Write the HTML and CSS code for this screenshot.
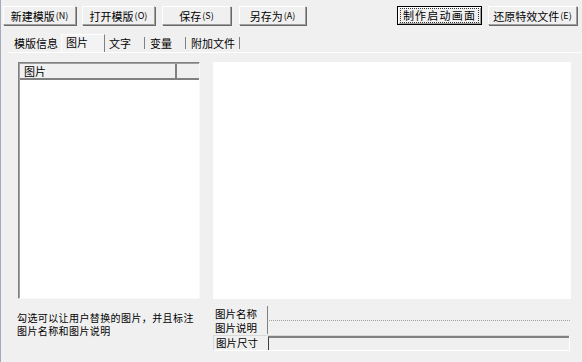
FILE: index.html
```html
<!DOCTYPE html>
<html lang="zh-CN">
<head>
<meta charset="utf-8">
<title>模版编辑</title>
<link rel="stylesheet" href="styles.css">
</head>
<body>
<div class="app">
  <div class="toolbar">
    <button class="btn b1">新建模版<span class="acc">(N)</span></button>
    <button class="btn b2">打开模版<span class="acc">(O)</span></button>
    <button class="btn b3">保存<span class="acc">(S)</span></button>
    <button class="btn b4">另存为<span class="acc">(A)</span></button>
    <button class="btn b5 default"><span class="focus">制作启动画面</span></button>
    <button class="btn b6">还原特效文件<span class="acc">(E)</span></button>
  </div>
  <div class="tabs">
    <div class="tab t1"><span>模版信息</span></div>
    <div class="tab t2 active"><span>图片</span></div>
    <div class="tab t3"><span>文字</span></div>
    <div class="tab t4"><span>变量</span></div>
    <div class="tab t5"><span>附加文件</span></div>
  </div>
  <div class="panel">
    <div class="content">
      <div class="listbox">
        <div class="lv-head">
          <div class="col c1">图片</div>
          <div class="col c2"></div>
        </div>
      </div>
      <div class="preview"></div>
      <div class="hint"><div class="hl">勾选可以让用户替换的图片，并且标注</div><div class="hl">图片名称和图片说明</div></div>
      <div class="props">
        <div class="prow r1"><div class="plabel">图片名称</div><div class="pval dotted"></div></div>
        <div class="prow r2"><div class="plabel">图片说明</div><div class="pval"></div></div>
        <div class="prow r3"><div class="plabel">图片尺寸</div><div class="pval field"></div></div>
      </div>
    </div>
  </div>
</div>
</body>
</html>
```
FILE: styles.css
```css
html, body {
  margin: 0;
  padding: 0;
}
body {
  width: 582px;
  height: 362px;
  overflow: hidden;
  background: #f0f0f0;
  font-family: "Noto Sans CJK SC", "Noto Sans", sans-serif;
  font-size: 11px;
  color: #000;
}
.app {
  height: 362px;
  box-sizing: border-box;
  border-left: 1px solid #a3abbe;
}
.toolbar {
  display: flex;
  padding: 6px 0 0 2px;
  height: 19px;
}
.btn {
  box-sizing: border-box;
  height: 19px;
  margin: 0;
  padding: 0;
  background: #f0f0f0;
  border: 1px solid;
  border-color: #ffffff #a0a0a0 #a0a0a0 #ffffff;
  box-shadow: 1px 1px 0 #696969;
  font: inherit;
  font-size: 11px;
  line-height: 16px;
  color: #000;
  display: flex;
  align-items: center;
  justify-content: center;
  white-space: nowrap;
}
.acc {
  font-size: 9px;
  margin-left: 1px;
}
.b1 { width: 73px; }
.b2 { width: 73px; margin-left: 6px; }
.b3 { width: 69px; margin-left: 7px; }
.b4 { width: 67px; margin-left: 8px; }
.b5 { width: 85px; margin-left: 91px; }
.b6 { width: 89px; margin-left: 6px; }
.btn.default {
  border: 1px solid #000;
  box-shadow: inset 1px 1px 0 #fff, inset -1px -1px 0 #a0a0a0;
}
.focus {
  box-sizing: border-box;
  width: 79px;
  text-align: center;
  border: 1px dotted #333;
  line-height: 13px;
  letter-spacing: 1.2px;
}
.tabs {
  display: flex;
  align-items: flex-end;
  margin-top: 8px;
  height: 19px;
  padding-left: 9px;
}
.tab {
  box-sizing: border-box;
  height: 19px;
  display: flex;
  align-items: flex-start;
  padding-top: 4px;
  white-space: nowrap;
}
.tab span {
  display: block;
  box-sizing: border-box;
  height: 12px;
  line-height: 12px;
  border-right: 1px solid #808080;
}
.t1 { width: 51px; padding-left: 4px; }
.t1 span { border-right: none; }
.t2 { width: 44px; }
.t3 { width: 40px; }
.t3 span { width: 40px; padding-left: 4px; }
.t4 { width: 41px; }
.t4 span { width: 41px; padding-left: 5px; }
.t5 { width: 56px; }
.t5 span { width: 54px; padding-left: 5px; }
.tab.active {
  height: 18px;
  padding-top: 1px;
  padding-left: 4px;
  border-top: 1px solid #fff;
  border-left: 1px solid #fff;
  border-right: 1px solid #808080;
  background: #f3f3f3;
}
.tab.active span {
  border-right: none;
}
.panel {
  border-top: 1px solid #fff;
  margin-left: 7px;
}
.content {
  display: grid;
  grid-template-columns: 182px 358px;
  grid-template-rows: 237px auto;
  column-gap: 13px;
  padding: 9px 0 0 10px;
}
.listbox {
  box-sizing: border-box;
  background: #fff;
  border: 1px solid;
  border-color: #808080 #f8f8f8 #f8f8f8 #808080;
  box-shadow: inset 1px 1px 0 #a0a0a0;
}
.lv-head {
  display: flex;
  height: 14px;
  background: #f0f0f0;
  border-bottom: 2px solid #808080;
  margin: 1px 0 0 1px;
}
.col {
  box-sizing: border-box;
  height: 14px;
  line-height: 14px;
  padding-left: 4px;
}
.c1 {
  width: 157px;
  border-right: 2px solid #808080;
}
.c2 {
  flex: 1;
}
.preview {
  background: #fff;
}
.hint {
  margin-left: -1px;
  padding-top: 12px;
  font-size: 10px;
  letter-spacing: 0.4px;
}
.hl {
  height: 13px;
  line-height: 13px;
  white-space: nowrap;
}
.props {
  margin-top: 7px;
  width: 357px;
  font-size: 10.5px;
}
.prow {
  display: flex;
  box-sizing: border-box;
}
.plabel {
  width: 54px;
  box-sizing: border-box;
  padding-left: 2px;
  line-height: 13px;
  white-space: nowrap;
}
.pval {
  flex: 1;
  border-left: 1px solid #808080;
}
.r1 { height: 15px; }
.r1 .plabel { padding-top: 1px; }
.pval.dotted {
  border-bottom: 1px dotted #a0a0a0;
}
.r2 { height: 13px; }
.r3 {
  height: 16px;
  margin-top: 1px;
  border: 1px solid;
  border-color: #d8d8d8 #fff #fff #d8d8d8;
}
.r3 .plabel { line-height: 14px; }
.pval.field {
  border-top: 2px solid #808080;
  border-left: 1px solid #404040;
  background: #f0f0f0;
}
```
